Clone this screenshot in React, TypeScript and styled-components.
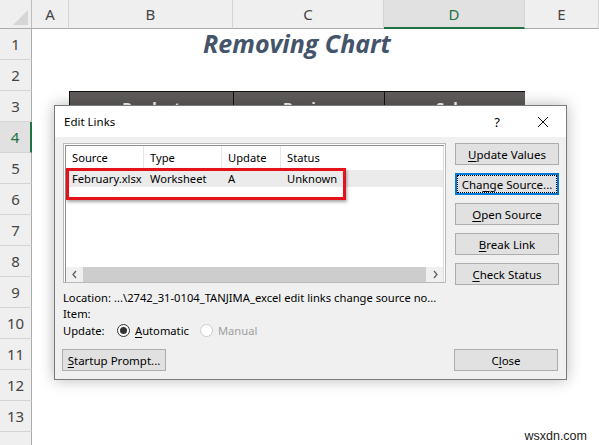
import * as React from "react";
import styled, { createGlobalStyle } from "styled-components";

const GlobalStyle = createGlobalStyle`
  body {
    margin: 0;
    background: #fff;
  }
`;

const UI_FONT = `"Noto Sans", "Open Sans", sans-serif`;

const columns = ["A", "B", "C", "D", "E"];
const rows = Array.from({ length: 14 }, (_, i) => i + 1);

const Page = () => {
  return (
    <Screen>
      <GlobalStyle />
      <Sheet>
        <Corner>
          <CornerTriangle />
        </Corner>
        {columns.map((c) => (
          <ColHead key={c} $active={c === "D"}>
            {c}
          </ColHead>
        ))}
        {rows.map((r) => (
          <React.Fragment key={r}>
            <RowHead $active={r === 4}>{r < 14 ? r : ""}</RowHead>
            {r === 1 ? (
              <>
                <Cell />
                <TitleCell>Removing Chart</TitleCell>
                <Cell />
              </>
            ) : r === 3 ? (
              <>
                <Cell />
                <TableHead>Product</TableHead>
                <TableHead>Region</TableHead>
                <TableHead>Sales</TableHead>
                <Cell />
              </>
            ) : (
              <BlankRow />
            )}
          </React.Fragment>
        ))}
      </Sheet>

      <Dialog>
        <TitleBar>
          <DialogTitle>Edit Links</DialogTitle>
          <TitleControls>
            <Help>?</Help>
            <CloseX>
              <svg width="12" height="12" viewBox="0 0 12 12">
                <path d="M1 1 L11 11 M11 1 L1 11" stroke="#111" strokeWidth="1" fill="none" />
              </svg>
            </CloseX>
          </TitleControls>
        </TitleBar>

        <DialogBody>
          <TopArea>
            <ListOuter>
              <ListInner>
                <ListHeader>
                  <ColLabel $w={78}>Source</ColLabel>
                  <ColLabel $w={78}>Type</ColLabel>
                  <ColLabel $w={59}>Update</ColLabel>
                  <ColLabel $w={90} $last>
                    Status
                  </ColLabel>
                </ListHeader>
                <ListRows>
                  <LinkRow>
                    <RowCell $w={78}>February.xlsx</RowCell>
                    <RowCell $w={78}>Worksheet</RowCell>
                    <RowCell $w={59}>A</RowCell>
                    <RowCell $w={90}>Unknown</RowCell>
                  </LinkRow>
                </ListRows>
                <HScroll>
                  <ScrollArrow>
                    <svg width="7" height="9" viewBox="0 0 7 9">
                      <path d="M5 1 L2 4.5 L5 8" stroke="#606060" strokeWidth="1.3" fill="none" />
                    </svg>
                  </ScrollArrow>
                  <ScrollThumb />
                  <ScrollArrow>
                    <svg width="7" height="9" viewBox="0 0 7 9">
                      <path d="M2 1 L5 4.5 L2 8" stroke="#606060" strokeWidth="1.3" fill="none" />
                    </svg>
                  </ScrollArrow>
                </HScroll>
              </ListInner>
              <Highlight />
            </ListOuter>

            <ButtonColumn>
              <DlgButton>
                <u>U</u>pdate Values
              </DlgButton>
              <DlgButton $focused>
                <FocusRing>
                  Cha<u>n</u>ge Source...
                </FocusRing>
              </DlgButton>
              <DlgButton>
                <u>O</u>pen Source
              </DlgButton>
              <DlgButton>
                <u>B</u>reak Link
              </DlgButton>
              <DlgButton>
                <u>C</u>heck Status
              </DlgButton>
            </ButtonColumn>
          </TopArea>

          <InfoBlock>
            <InfoLine>
              <InfoLabel>Location:</InfoLabel>
              <span>...\2742_31-0104_TANJIMA_excel edit links change source no...</span>
            </InfoLine>
            <InfoLine>
              <InfoLabel>Item:</InfoLabel>
            </InfoLine>
            <RadioLine>
              <InfoLabel>Update:</InfoLabel>
              <RadioOption>
                <RadioCircle $checked />
                <span>
                  <u>A</u>utomatic
                </span>
              </RadioOption>
              <RadioOption $disabled>
                <RadioCircle $disabled />
                <span>Manual</span>
              </RadioOption>
            </RadioLine>
          </InfoBlock>

          <BottomRow>
            <DlgButton>
              <u>S</u>tartup Prompt...
            </DlgButton>
            <DlgButton>
              C<u>l</u>ose
            </DlgButton>
          </BottomRow>
        </DialogBody>
      </Dialog>

      <Watermark>wsxdn.com</Watermark>
    </Screen>
  );
};

const Screen = styled.div`
  position: relative;
  width: 599px;
  height: 445px;
  overflow: hidden;
  background: #fff;
`;

const Sheet = styled.div`
  display: grid;
  grid-template-columns: 32px 37px 164px 151px 141px 1fr;
  grid-template-rows: 29px repeat(14, 31px);
  width: 599px;
  font-family: ${UI_FONT};
`;

const Corner = styled.div`
  position: relative;
  background: #efefef;
  border-right: 1px solid #bdbdbd;
  border-bottom: 1px solid #ababab;
`;

const CornerTriangle = styled.div`
  position: absolute;
  right: 3px;
  bottom: 3px;
  width: 0;
  height: 0;
  border-left: 15px solid transparent;
  border-bottom: 15px solid #d6d6d6;
`;

const ColHead = styled.div<{ $active?: boolean }>`
  display: flex;
  align-items: center;
  justify-content: center;
  background: ${(p) => (p.$active ? "#e1e1e1" : "#efefef")};
  border-right: 1px solid #d4d4d4;
  border-bottom: ${(p) => (p.$active ? "2px solid #217346" : "1px solid #ababab")};
  color: ${(p) => (p.$active ? "#217346" : "#444")};
  font-size: 15px;
  padding-top: ${(p) => (p.$active ? "1px" : "0")};
`;

const RowHead = styled.div<{ $active?: boolean }>`
  display: flex;
  align-items: center;
  justify-content: center;
  background: ${(p) => (p.$active ? "#e1e1e1" : "#efefef")};
  border-right: ${(p) => (p.$active ? "2px solid #217346" : "1px solid #ababab")};
  border-bottom: 1px solid #d4d4d4;
  color: ${(p) => (p.$active ? "#217346" : "#444")};
  font-size: 15px;
`;

const Cell = styled.div`
  background: #fff;
`;

const BlankRow = styled.div`
  grid-column: 2 / -1;
  background: #fff;
`;

const TitleCell = styled.div`
  grid-column: 3 / 6;
  display: flex;
  align-items: center;
  justify-content: center;
  padding-bottom: 3px;
  font-family: "Open Sans", sans-serif;
  font-style: italic;
  font-weight: 700;
  font-size: 25px;
  color: #44546a;
`;

const TableHead = styled.div`
  display: flex;
  align-items: center;
  justify-content: center;
  background: #5f5b5b;
  border: 1px solid #111;
  margin-right: -1px;
  color: #fff;
  font-weight: 700;
  font-size: 15px;
`;

const Dialog = styled.div`
  position: absolute;
  left: 54px;
  top: 105px;
  width: 511px;
  border: 1px solid #7a7a7a;
  background: #f0f0f0;
  box-shadow: 0 0 14px rgba(0, 0, 0, 0.28);
  font-family: ${UI_FONT};
  font-size: 11.2px;
  color: #000;
`;

const TitleBar = styled.div`
  display: flex;
  align-items: center;
  justify-content: space-between;
  height: 31px;
  padding-left: 9px;
  background: #fff;
`;

const DialogTitle = styled.span`
  font-size: 11.5px;
`;

const TitleControls = styled.div`
  display: flex;
  align-items: center;
  height: 100%;
`;

const Help = styled.span`
  width: 46px;
  text-align: center;
  font-size: 13px;
`;

const CloseX = styled.span`
  display: flex;
  align-items: center;
  justify-content: center;
  width: 46px;
  height: 100%;
`;

const DialogBody = styled.div`
  padding: 6px 7px 8px 8px;
`;

const TopArea = styled.div`
  display: flex;
  gap: 9px;
`;

const ListOuter = styled.div`
  position: relative;
  width: 383px;
  height: 140px;
  box-sizing: border-box;
  border: 1px solid #b9b9b9;
  padding: 1px 1px 0 1px;
  background: #fff;
`;

const ListInner = styled.div`
  display: flex;
  flex-direction: column;
  height: 100%;
  box-sizing: border-box;
  border: 1px solid #8f8f8f;
  border-bottom: none;
  border-right-color: #dcdcdc;
`;

const ListHeader = styled.div`
  display: flex;
  height: 23px;
  background: #fff;
`;

const ColLabel = styled.div<{ $w: number; $last?: boolean }>`
  width: ${(p) => p.$w}px;
  box-sizing: border-box;
  padding: 4px 0 0 6px;
  border-right: ${(p) => (p.$last ? "none" : "1px solid #e5e5e5")};
`;

const ListRows = styled.div`
  flex: 1;
  padding-top: 1px;
`;

const LinkRow = styled.div`
  display: flex;
  height: 17px;
  align-items: center;
  background: #ebebeb;
`;

const RowCell = styled.div<{ $w: number }>`
  width: ${(p) => p.$w}px;
  box-sizing: border-box;
  padding-left: 6px;
  white-space: nowrap;
`;

const HScroll = styled.div`
  display: flex;
  align-items: center;
  height: 15px;
  background: #f0f0f0;
`;

const ScrollArrow = styled.div`
  display: flex;
  align-items: center;
  justify-content: center;
  width: 16px;
  height: 100%;
`;

const ScrollThumb = styled.div`
  flex: 1;
  height: 100%;
  margin: 0 1px;
  background: #cdcdcd;
`;

const Highlight = styled.div`
  position: absolute;
  left: 2px;
  top: 24px;
  width: 280px;
  height: 32px;
  box-sizing: border-box;
  border: 3px solid #e3121b;
  box-shadow: 1px 2px 3px rgba(0, 0, 0, 0.35);
`;

const ButtonColumn = styled.div`
  display: flex;
  flex-direction: column;
  gap: 8px;
`;

const DlgButton = styled.div<{ $focused?: boolean }>`
  display: flex;
  align-items: center;
  justify-content: center;
  width: 104px;
  height: 22px;
  box-sizing: border-box;
  background: #e1e1e1;
  border: 1px solid ${(p) => (p.$focused ? "#0078d7" : "#adadad")};
  box-shadow: ${(p) => (p.$focused ? "inset 0 0 0 1px #0078d7" : "none")};
  padding: ${(p) => (p.$focused ? "2px" : "0")};
  white-space: nowrap;
  font-size: 11.5px;

  u {
    text-decoration-thickness: 1px;
    text-underline-offset: 2px;
  }
`;

const FocusRing = styled.span`
  display: flex;
  align-items: center;
  justify-content: center;
  width: 100%;
  height: 100%;
  box-sizing: border-box;
  outline: 1px dotted #000;
`;

const InfoBlock = styled.div`
  margin-top: 5px;
`;

const InfoLine = styled.div`
  display: flex;
  height: 16px;
  line-height: 16px;
  white-space: nowrap;
`;

const InfoLabel = styled.span`
  display: inline-block;
  width: 51px;
  flex-shrink: 0;
`;

const RadioLine = styled.div`
  display: flex;
  align-items: center;
  height: 17px;

  u {
    text-underline-offset: 2px;
  }
`;

const RadioOption = styled.div<{ $disabled?: boolean }>`
  display: flex;
  align-items: center;
  gap: 5px;
  margin-left: 3px;
  margin-right: 8px;
  color: ${(p) => (p.$disabled ? "#a0a0a0" : "#000")};
`;

const RadioCircle = styled.span<{ $checked?: boolean; $disabled?: boolean }>`
  position: relative;
  width: 13px;
  height: 13px;
  box-sizing: border-box;
  border-radius: 50%;
  border: 1px solid ${(p) => (p.$disabled ? "#cccccc" : "#333")};
  background: #fff;

  &::after {
    content: "";
    display: ${(p) => (p.$checked ? "block" : "none")};
    position: absolute;
    left: 2px;
    top: 2px;
    width: 7px;
    height: 7px;
    border-radius: 50%;
    background: #333;
  }
`;

const BottomRow = styled.div`
  display: flex;
  justify-content: space-between;
  margin-top: 10px;
  padding-right: 1px;
  margin-left: -1px;
`;

const Watermark = styled.div`
  position: absolute;
  right: 12px;
  bottom: 2px;
  font-family: "Liberation Sans", Arial, sans-serif;
  font-size: 12.5px;
  color: #222;
`;

export default Page;
